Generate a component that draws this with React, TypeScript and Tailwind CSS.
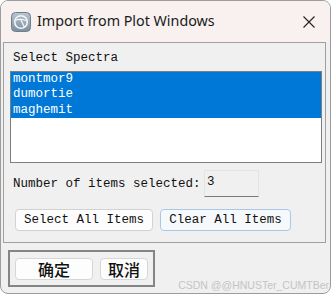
import React from 'react';

const mono = { fontFamily: '"Liberation Mono", "DejaVu Sans Mono", monospace' };

const AppIcon = () => (
  <svg width="20" height="20" viewBox="0 0 20 20">
    <defs>
      <linearGradient id="ig" x1="0" y1="0" x2="0" y2="1">
        <stop offset="0" stopColor="#b9c6d2" />
        <stop offset="1" stopColor="#7d8e9e" />
      </linearGradient>
    </defs>
    <rect x="0.5" y="0.5" width="19" height="19" rx="4" fill="url(#ig)" stroke="#6f7f8e" />
    <circle cx="10" cy="10" r="6.3" fill="none" stroke="#f4f6f8" strokeWidth="1.6" />
    <path d="M4 8.5 C8 7 12 7 16 9" fill="none" stroke="#f4f6f8" strokeWidth="1.3" />
    <path d="M10 8 L13.5 15.5" fill="none" stroke="#f4f6f8" strokeWidth="1.3" />
  </svg>
);

const items = ['montmor9', 'dumortie', 'maghemit'];

export default function App() {
  return (
    <div className="w-[332px] h-[296px] bg-white overflow-hidden">
      <div className="w-[331px] h-[294px] rounded-[8px] border border-[#9c9c9c] bg-[#f0f0f0] overflow-hidden flex flex-col relative">
        {/* Title bar */}
        <div className="h-[41px] shrink-0 bg-[#f8f1ef] flex items-center pl-[10px] pr-[15px]">
          <AppIcon />
          <span
            className="ml-[6px] text-[14.3px] text-[#1a1a1a] leading-none"
            style={{ fontFamily: '"Noto Sans", "Open Sans", sans-serif' }}
          >
            Import from Plot Windows
          </span>
          <svg className="ml-auto" width="12" height="12" viewBox="0 0 12 12">
            <path d="M0.5 0.5 L11.5 11.5 M11.5 0.5 L0.5 11.5" stroke="#222" strokeWidth="1.1" />
          </svg>
        </div>

        {/* Body */}
        <div className="flex-1 flex flex-col pl-[2px]" style={mono}>
          <div className="w-[323px] h-[201px] border border-[#a0a0a0] flex flex-col pl-[6px] pr-[3px]">
            <div className="h-[28px] pl-[3px] pt-[8px] text-[12.5px] leading-[14px] text-[#111]">
              Select Spectra
            </div>
            <div className="h-[92px] border border-[#7e7e7e] bg-white">
              {items.map((it) => (
                <div
                  key={it}
                  className="h-[15.3px] bg-[#0078d7] text-white text-[12.5px] leading-[15px] pl-[2px]"
                >
                  {it}
                </div>
              ))}
            </div>
            <div className="flex items-center mt-[7px] pl-[3px]">
              <span className="text-[12.5px] leading-[14px] text-[#111] w-[191px]">
                Number of items selected:
              </span>
              <div className="w-[55px] h-[27px] border border-[#e4e4e4] border-b-[#7a7a7a] bg-[#f0f0f0] text-[12.5px] leading-[14px] pl-[2px] pt-[4px] text-[#111]">
                3
              </div>
            </div>
            <div className="flex gap-[7px] mt-[12px] pl-[5px]">
              <button className="w-[138px] h-[22px] rounded-[4px] border border-[#d2d2d2] bg-[#fdfdfd] text-[12.5px] leading-none text-[#111]">
                Select All Items
              </button>
              <button className="w-[131px] h-[22px] rounded-[4px] border border-[#a9c8e6] bg-[#f6f9fc] text-[12.5px] leading-none text-[#111]">
                Clear All Items
              </button>
            </div>
          </div>

          <div className="ml-[5px] mt-[7px] w-[147px] h-[37px] border-2 border-[#858585] flex items-center gap-[7px] pl-[5px]">
            <button
              className="w-[78px] h-[22px] rounded-[4px] border border-[#d6d6d6] bg-[#fdfdfd] text-[16px] leading-none text-[#111] font-medium"
              style={{ fontFamily: '"Noto Sans CJK SC", sans-serif' }}
            >
              确定
            </button>
            <button
              className="w-[48px] h-[22px] rounded-[4px] border border-[#d6d6d6] bg-[#fdfdfd] text-[16px] leading-none text-[#111] font-medium"
              style={{ fontFamily: '"Noto Sans CJK SC", sans-serif' }}
            >
              取消
            </button>
          </div>
        </div>

        <span
          className="absolute right-[1px] bottom-[3px] text-[10.5px] text-[#c4c4c4] leading-none"
          style={{ fontFamily: '"Liberation Sans", Arial, sans-serif' }}
        >
          CSDN @@HNUSTer_CUMTBer
        </span>
      </div>
    </div>
  );
}
